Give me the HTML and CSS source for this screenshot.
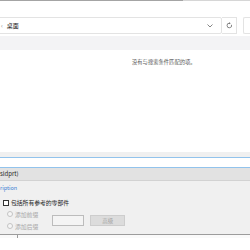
FILE: index.html
```html
<!DOCTYPE html>
<html>
<head>
<meta charset="utf-8">
<title>零部件</title>
<link rel="stylesheet" href="styles.css">
</head>
<body>
    <div class="topline"></div>
    <div class="search-row">
        <div class="path-box">
            <span class="crumb-arrow">&#8249;</span>
            <span class="crumb">桌面</span>
            <svg class="chev" width="6" height="4" viewBox="0 0 6 4"><path d="M0.5 0.5 L3 3 L5.5 0.5" fill="none" stroke="#777" stroke-width="0.9"/></svg>
        </div>
        <div class="refresh">
            <svg width="7" height="7" viewBox="0 0 8 8"><path d="M6.3 3.2 A2.6 2.6 0 1 1 4 1.4" fill="none" stroke="#666" stroke-width="0.9"/><path d="M3.6 0.2 L5.4 1.4 L3.6 2.6 Z" fill="#666"/></svg>
        </div>
        <div class="search-box"></div>
    </div>
    <div class="list-head"></div>
    <div class="list">
        <p class="empty">没有与搜索条件匹配的项。</p>
    </div>
    <div class="split"></div>
    <div class="blank"></div>
    <div class="panel">
        <div class="panel-title">sldprt)</div>
        <div class="panel-body">
            <a href="#" class="desc">ription</a>
            <label class="check"><span class="box"></span>包括所有参考的零部件</label>
            <div class="options">
                <div class="radios">
                    <div class="radio"><span class="dot"></span>添加前缀</div>
                    <div class="radio"><span class="dot"></span>添加后缀</div>
                </div>
                <div class="affix"></div>
                <button class="adv" disabled>高级</button>
            </div>
        </div>
    </div>
    <div class="bottom">
        <div class="cell first"></div>
        <div class="cell"></div>
    </div>
</body>
</html>
```

FILE: styles.css
```css
body,div,p,button { margin:0; padding:0; }
body { width:250px; height:250px; overflow:hidden; background:#fff; font:6px "Noto Sans CJK SC","Liberation Sans",sans-serif; color:#333; }
a { text-decoration:none; color:#3a7fd4; }

.topline { height:1px; background:linear-gradient(to right,#a4a4a4 183px,#d6d6d6 183px); }

.search-row { display:flex; gap:5px; height:17px; margin:16px 0 0 -4px; }
.path-box { display:flex; align-items:center; width:226px; border:1px solid #e3e3e3; border-radius:2px; box-sizing:border-box; padding:0 8px 0 4px; }
.crumb-arrow { color:#888; font-size:6px; }
.crumb { margin-left:4px; font-size:6px; color:#222; flex:1; }
.chev { display:block; }
.refresh { display:flex; align-items:center; justify-content:center; width:15px; margin-left:-5px; border:1px solid #e3e3e3; border-left:none; box-sizing:border-box; }
.search-box { flex:1; margin-left:1px; border:1px solid #e3e3e3; border-right:none; border-radius:2px 0 0 2px; }

.list-head { height:14px; margin-top:2px; background:#f3f3f5; }
.list { height:102px; }
.empty { padding:8px 0 0 132px; font-size:5.3px; color:#555; }

.split { height:5px; background:#f0f0f0; border-bottom:1px solid #92c3ec; }
.blank { height:9px; background:#fff; border-bottom:1px solid #92c3ec; }

.panel { background:#f0f0f0; height:66px; border-bottom:1px solid #9c9c9c; }
.panel-title { height:12px; line-height:12px; background:#e2e2e2; border-bottom:1px solid #d2d2d2; font-size:6px; color:#222; }
.panel-body { padding:3px 0 0 0; }
.desc { display:block; font-size:5.5px; height:9px; }
.check { display:flex; align-items:center; gap:2px; margin:5px 0 0 3px; font-size:5.8px; color:#222; }
.box { width:4px; height:4px; border:1px solid #333; background:#fff; }
.options { display:flex; align-items:flex-start; margin-top:3px; }
.radios { display:flex; flex-direction:column; gap:4px; margin-left:7px; }
.radio { display:flex; align-items:center; gap:2px; font-size:5.8px; color:#a8a8a8; height:8px; }
.dot { width:4px; height:4px; border:1px solid #c4c4c4; border-radius:50%; background:#f6f6f6; }
.affix { width:32px; height:11px; margin:5px 0 0 14px; border:1px solid #bcbcbc; background:#f4f4f4; box-sizing:border-box; }
.adv { width:35px; height:11px; margin:5px 0 0 6px; border:1px solid #cdcdcd; background:#dcdcdc; color:#a4a4a4; font:5.5px "Noto Sans CJK SC",sans-serif; }

.bottom { display:flex; height:3px; background:#fafafa; }
.cell.first { width:17px; border-right:1px solid #9c9c9c; }
```
